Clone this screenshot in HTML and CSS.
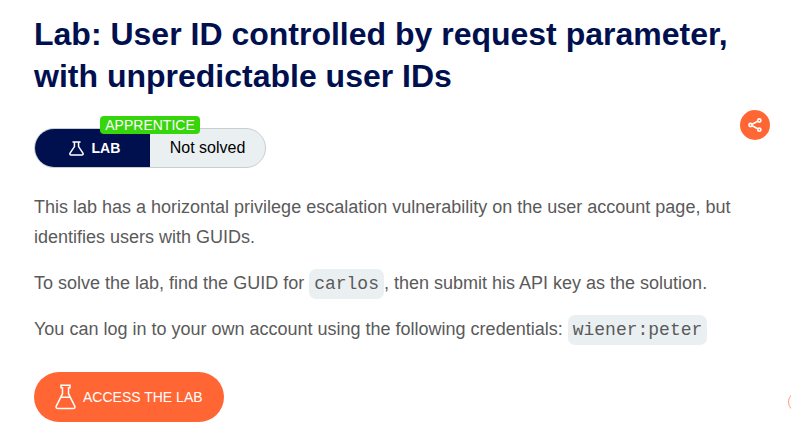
FILE: index.html
```
<!DOCTYPE html>
<html lang="en">
<head>
<meta charset="utf-8">
<title>Lab</title>
<link rel="stylesheet" href="styles.css">
</head>
<body>
<main class="page">
  <h1 class="title">Lab: User ID controlled by request parameter, with unpredictable user IDs</h1>
  <div class="meta">
    <div class="status">
      <span class="level">APPRENTICE</span>
      <div class="status-type">
        <svg class="flask-small" viewBox="0 0 16 16"><path d="M3.7 1h8.6M5.8 1v5L1.3 12.6C.5 14 1 15 2.4 15h11.2c1.4 0 1.9-1 1.1-2.4L10.2 6V1"/></svg>
        <span>LAB</span>
      </div>
      <div class="status-state">Not solved</div>
    </div>
    <a class="share" href="#" aria-label="Share">
      <svg viewBox="0 0 30 30"><path d="M17.7 11.3l-5.6 2.9M12.1 15.8l5.6 3"/><circle cx="19.3" cy="10.5" r="1.6"/><circle cx="10.5" cy="15" r="1.6"/><circle cx="19.3" cy="19.7" r="1.6"/></svg>
    </a>
  </div>
  <p>This lab has a horizontal privilege escalation vulnerability on the user account page, but identifies users with GUIDs.</p>
  <p>To solve the lab, find the GUID for <code>carlos</code>, then submit his API key as the solution.</p>
  <p>You can log in to your own account using the following credentials: <code>wiener:peter</code></p>
  <a class="access" href="#">
    <svg class="flask-large" viewBox="0 0 21 26"><path d="M6 1.3h9v2.4h-1.5v6L19.6 21.8c.8 1.7.1 2.8-1.6 2.8H3c-1.7 0-2.4-1.1-1.6-2.8L7.5 9.7v-6H6zM5.6 13.3h9.8"/></svg>
    <span>ACCESS THE LAB</span>
  </a>
</main>
<svg class="edge-ring" viewBox="0 0 4 22"><circle cx="11.5" cy="11" r="10"/></svg>
</body>
</html>
```
FILE: styles.css
```
* { box-sizing: border-box; }
body {
  margin: 0;
  height: 433px;
  overflow: hidden;
  position: relative;
  background: #fff;
  color: #5a5a5a;
  font-family: "Liberation Sans", Arial, sans-serif;
  font-size: 18px;
  line-height: 30px;
}
.page { padding: 13px 21px 0 34px; }
.title {
  margin: 0;
  color: #00104f;
  font-size: 32px;
  line-height: 42px;
  font-weight: 700;
}
.meta {
  display: flex;
  justify-content: space-between;
  align-items: flex-start;
  margin-top: 13px;
  height: 58px;
}
.status {
  position: relative;
  display: flex;
  width: 232px;
  height: 40px;
  margin-top: 18px;
  border: 1px solid #c8cfd0;
  border-radius: 20px;
  background: #eaf0f2;
}
.status-type {
  display: flex;
  align-items: center;
  width: 115px;
  padding-left: 34px;
  gap: 7.5px;
  border-radius: 19px 0 0 19px;
  background: #00104f;
  color: #fff;
  font-size: 14px;
  font-weight: 700;
}
.status-state {
  flex: 1;
  color: #000;
  font-size: 16px;
  line-height: 38px;
  text-align: center;
}
.level {
  position: absolute;
  left: 65px;
  top: -13px;
  width: 100px;
  height: 18px;
  border-radius: 4px;
  background: #37d60c;
  color: #fff;
  font-size: 14px;
  line-height: 18px;
  text-align: center;
}
svg { display: block; fill: none; stroke: #fff; }
.flask-small { width: 15px; height: 15px; stroke-width: 1.6; }
.share {
  width: 30px;
  height: 30px;
  border-radius: 50%;
  background: #f63;
}
.share svg { stroke-width: 1.6; }
p { margin: 0 0 16px; }
.meta + p { margin-top: 24px; }
code {
  padding: 5px;
  border-radius: 7px;
  background: #eaf0f2;
  font-family: "Liberation Mono", monospace;
  font-size: 18px;
  line-height: 0;
}
.access {
  display: flex;
  align-items: center;
  width: 190px;
  height: 50px;
  margin-top: 28px;
  padding-left: 21px;
  gap: 7px;
  border-radius: 25px;
  background: #f63;
  color: #fff;
  font-size: 14px;
  text-decoration: none;
}
.flask-large { width: 21px; height: 26px; stroke-width: 1.5; }
.edge-ring {
  position: absolute;
  right: 0;
  top: 391px;
  width: 4px;
  height: 22px;
  stroke: #ff9d7c;
}
```
